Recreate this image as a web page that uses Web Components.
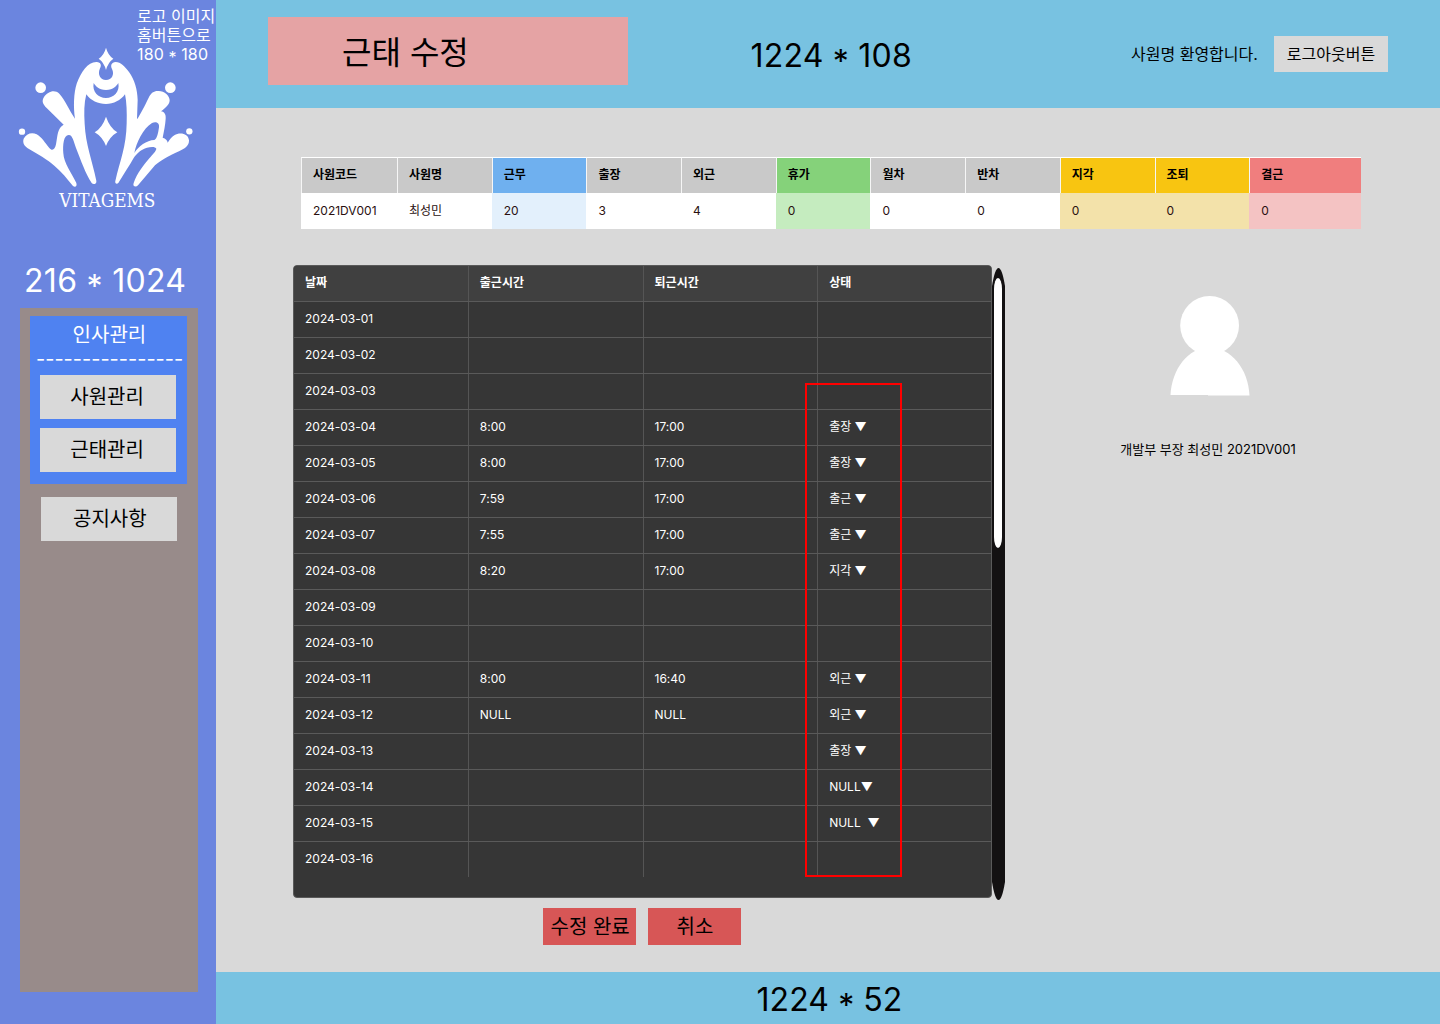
<!DOCTYPE html>
<html lang="ko">
<head>
<meta charset="utf-8">
<title>근태 수정</title>
<style>
body{margin:0;width:1440px;height:1024px;overflow:hidden;background:#d9d9d9;color:#000;font-family:Inter,"Noto Sans CJK KR",sans-serif;font-feature-settings:"calt" 0;}
</style>
</head>
<body>
<attendance-app></attendance-app>
<script>
function define(name, html, render){
  const tpl = document.createElement('template');
  tpl.innerHTML = html;
  customElements.define(name, class extends HTMLElement{
    constructor(){
      super();
      this.attachShadow({mode:'open'}).append(tpl.content.cloneNode(true));
    }
    connectedCallback(){ if(render) render(this, this.shadowRoot); }
  });
}

define('vita-logo', `
<style>
:host{display:block;width:216px;height:220px}
svg{display:block}
text{font-family:"DejaVu Serif Condensed","DejaVu Serif",serif;font-stretch:condensed}
</style>
<svg width="216" height="220" viewBox="0 0 648 660" fill="#fff">
  <path d="M318 143Q324 166 340 176Q324 187 318 210Q312 187 296 176Q312 166 318 143Z"/>
  <path fill-rule="evenodd" d="M290 186C303 187 305 196 300 205C292 223 300 240 318 240C336 240 344 223 336 207C331 196 334 187 347 186C362 186 375 200 387 216C404 240 412 268 413 300L411 358C421 343 434 318 446 293C453 279 461 273 473 273C491 271 510 287 509 302C507 316 495 324 483 334C494 336 498 344 497 356C496 374 492 392 488 413C497 415 502 421 503 428C509 419 514 411 523 406C539 396 565 400 567 421C568 437 553 447 537 454C505 468 482 482 465 496L414 556C408 563 397 560 401 549C411 520 430 497 448 475C458 463 468 454 469 446C467 439 451 440 441 443C423 448 411 460 401 474C388 497 371 523 355 549C350 554 344 550 346 543C360 482 379 440 380 370C381 337 380 307 375 283C362 301 341 312 318 312C294 312 272 302 259 283C252 309 252 339 254 372C257 435 276 479 289 542C291 552 280 555 275 549C256 519 244 485 228 444C221 424 217 404 206 405C191 405 188 434 190 460C191 488 215 520 229 549C232 558 226 564 219 558C203 538 184 514 163 497C143 479 114 463 87 447C73 438 67 429 71 416C78 401 96 395 110 403C126 412 135 429 148 444C157 455 165 448 168 433C173 407 172 384 191 374L140 324C129 313 124 304 132 291C142 276 163 266 178 281C195 299 207 329 225 356C220 321 221 279 230 251C243 216 264 185 290 186ZM281 249C276 275 294 294 318 294C342 294 360 275 355 249C349 258 341 269 318 270C295 269 287 258 281 249ZM403 459C409 428 429 386 456 369C468 363 479 369 477 382C474 401 472 415 463 420C440 420 415 440 403 459Z"/>
  <path d="M318 350Q329 383 352 397Q329 410 318 438Q307 410 284 397Q307 383 318 350Z"/>
  <circle cx="122" cy="263" r="16"/><circle cx="511" cy="263" r="16"/>
  <circle cx="66" cy="395" r="9.5"/><circle cx="568" cy="394" r="9.5"/>
  <text x="178" y="620" font-size="54" textLength="288" lengthAdjust="spacingAndGlyphs">VITAGEMS</text>
</svg>`);

define('size-label', `
<style>
:host{display:block;white-space:nowrap}
span{position:relative;top:.18em}
</style>`, (el, root) => {
  const [w, h] = el.getAttribute('value').split('x');
  root.innerHTML += `${w} <span>*</span> ${h}`;
});

define('nav-button', `
<style>
:host{display:flex;box-sizing:border-box;width:136px;height:44px;padding-left:var(--inset,30.3px);background:#d9d9d9;color:#000;font-size:20px;line-height:45px;white-space:nowrap}
</style><slot></slot>`);

define('nav-group', `
<style>
:host{display:flex;flex-direction:column;align-items:flex-start;gap:9px;box-sizing:border-box;width:157px;height:168px;padding:6px 10px 0;background:#4f82f1;color:#fff;font-size:20px}
.head{height:44px;margin-left:-4px;white-space:nowrap}
.title{height:24px;line-height:26px;padding-left:36.6px}
.rule{line-height:24px;height:20px;margin-top:1px}
</style>
<div class="head"><div class="title"><slot name="title"></slot></div><div class="rule">----------------</div></div>
<slot></slot>`);

define('side-bar', `
<style>
:host{display:flex;flex-direction:column;position:relative;width:216px;height:1024px;background:#6b85df;color:#fff}
.note{position:absolute;left:137px;top:7px;font-size:16px;line-height:19.2px;white-space:pre}
.note size-label{letter-spacing:.12px}
.size{height:48px;margin-top:40px;padding-left:24px;font-size:32px;line-height:42px;letter-spacing:.3px}
nav{display:flex;flex-direction:column;gap:13px;box-sizing:border-box;width:178px;height:684px;margin-left:20px;padding:8px 0 0 10px;background:#988b8a}
.notice{margin-left:11px;--inset:32px}
</style>
<vita-logo></vita-logo>
<div class="note">로고 이미지
홈버튼으로<size-label value="180x180"></size-label></div>
<size-label class="size" value="216x1024"></size-label>
<nav>
  <nav-group><span slot="title">인사관리</span><nav-button>사원관리</nav-button><nav-button>근태관리</nav-button></nav-group>
  <nav-button class="notice">공지사항</nav-button>
</nav>`);

define('top-bar', `
<style>
:host{display:flex;align-items:flex-start;height:108px;background:#78c2e1;white-space:nowrap}
.title{box-sizing:border-box;width:360px;height:68px;margin:17px 0 0 52px;padding-left:74px;background:#e5a3a4;font-size:32px;line-height:71px}
.size{width:380.500px;margin-left:122.500px;padding-top:36px;font-size:32px;line-height:39px;letter-spacing:.22px}
.hello{width:143px;padding-top:36px;font-size:16px;line-height:36px}
.out{width:114px;height:36px;margin-top:36px;background:#d9d9d9;font-size:16px;line-height:36px;text-align:center}
</style>
<div class="title">근태 수정</div><size-label class="size" value="1224x108"></size-label>
<div class="hello">사원명 환영합니다.</div><div class="out">로그아웃버튼</div>`);

define('summary-table', `
<style>
:host{display:grid;grid-template-columns:96px repeat(9,94.7px) 111.7px;width:1060px;height:72px;font-size:12px}
div div{box-sizing:border-box;height:36px;padding-left:11px;line-height:35px;border-left:1px solid rgba(255,255,255,.75);white-space:nowrap}
.h{border-top:1px solid #fff;background:var(--h,#c9c9c9);background-clip:padding-box;font-weight:700;line-height:34px}
.v{background:var(--v,#fff);color:#2a1010;border-left-color:transparent}
</style>`, (el, root) => {
  const blue=['#6fb0ef','#e3f0fc'], green=['#85d27a','#c5ecbf'], gold=['#f8c511','#f3e2aa'], red=['#f07e7e','#f4c3c3'];
  [['사원코드','2021DV001'],['사원명','최성민'],['근무','20',blue],['출장','3'],['외근','4'],['휴가','0',green],
   ['월차','0'],['반차','0'],['지각','0',gold],['조퇴','0',gold],['결근','0',red]].forEach(([h,v,c]) => {
    const col = document.createElement('div');
    if(c){ col.style.setProperty('--h',c[0]); col.style.setProperty('--v',c[1]); }
    col.innerHTML = `<div class="h">${h}</div><div class="v">${v}</div>`;
    root.append(col);
  });
});

define('time-table', `
<style>
:host{display:block;box-sizing:border-box;position:relative;width:699px;height:633px;border:1px solid #5a5a5a;border-radius:4px;background:#363636;color:#fff;font-size:12px}
.row{display:grid;grid-template-columns:174px 174.75px 174.6px 1fr;box-sizing:border-box;height:36px;border-top:1px solid #5a5a5a}
.row div{box-sizing:border-box;padding-left:10.8px;line-height:33px;border-left:1px solid #555;white-space:pre}
.row div:first-child{border-left:0;padding-left:11px}
.head{height:35px;border-top:0;background:#404040;font-weight:700;border-radius:3px 3px 0 0}
.mark{position:absolute;left:511px;top:117px;width:93px;height:490px;border:2px solid #f00}
</style>
<div class="row head"><div>날짜</div><div>출근시간</div><div>퇴근시간</div><div>상태</div></div>`, (el, root) => {
  const data = {4:['8:00','17:00','출장 ▼'],5:['8:00','17:00','출장 ▼'],6:['7:59','17:00','출근 ▼'],7:['7:55','17:00','출근 ▼'],
    8:['8:20','17:00','지각 ▼'],11:['8:00','16:40','외근 ▼'],12:['NULL','NULL','외근 ▼'],13:['','','출장 ▼'],14:['','','NULL▼'],15:['','','NULL  ▼']};
  for(let d=1; d<=16; d++){
    const row = document.createElement('div');
    row.className = 'row';
    row.innerHTML = ['2024-03-'+String(d).padStart(2,'0'), ...(data[d]||['','',''])].map(t => `<div>${t}</div>`).join('');
    root.append(row);
  }
  const mark = document.createElement('div');
  mark.className = 'mark';
  root.append(mark);
});

define('scroll-track', `
<style>
:host{display:block;box-sizing:border-box;width:13px;height:632px;margin-top:3px;padding:10px 0 0 2px;background:#131112;clip-path:path("M0 18Q3 0 6.5 0Q10 0 13 18V614Q10 632 6.5 632Q3 632 0 614Z")}
div{width:8px;height:270px;background:#fff;border-radius:4px / 11px}
</style><div></div>`);

define('action-button', `
<style>
:host{display:block;box-sizing:border-box;width:93px;height:36.5px;background:#d75656;font-size:20px;line-height:39px;white-space:nowrap;padding-left:var(--inset,7.5px)}
</style><slot></slot>`);

define('profile-card', `
<style>
:host{display:flex;flex-direction:column;align-items:center;width:180px;font-size:13px;white-space:nowrap}
svg{display:block;margin:0 0 42px 4px}
</style>
<svg width="80" height="101" viewBox="0 0 80 101" fill="#fff"><circle cx="39.6" cy="29.5" r="29.4"/><path d="M.5 99.1C2 73 18 51.500 39.500 51.500S78.500 73 79.500 99.500H38V99.100Z"/></svg>
<slot></slot>`);

define('bottom-bar', `
<style>:host{display:block;box-sizing:border-box;height:52px;padding-left:540.500px;background:#78c2e1;font-size:32px;line-height:56px;letter-spacing:.08px}</style><size-label value="1224x52"></size-label>`);

define('attendance-app', `
<style>
:host{display:grid;grid-template-columns:216px 1224px;height:1024px}
.page{display:grid;grid-template-rows:108px 864px 52px}
main{display:flex;flex-direction:column;padding:49px 0 0 77px}
summary-table{margin-left:8px}
.body{display:flex;align-items:flex-start;margin-top:36px;height:643px}
profile-card{margin:31px 0 0 113px}
.actions{display:flex;gap:12px;margin-left:250px}
.cancel{--inset:28.5px}
</style>
<side-bar></side-bar>
<div class="page">
  <top-bar></top-bar>
  <main>
    <summary-table></summary-table>
    <div class="body"><time-table></time-table><scroll-track></scroll-track><profile-card>개발부 부장 최성민 2021DV001</profile-card></div>
    <div class="actions"><action-button>수정 완료</action-button><action-button class="cancel">취소</action-button></div>
  </main>
  <bottom-bar></bottom-bar>
</div>`);
</script>
</body>
</html>
